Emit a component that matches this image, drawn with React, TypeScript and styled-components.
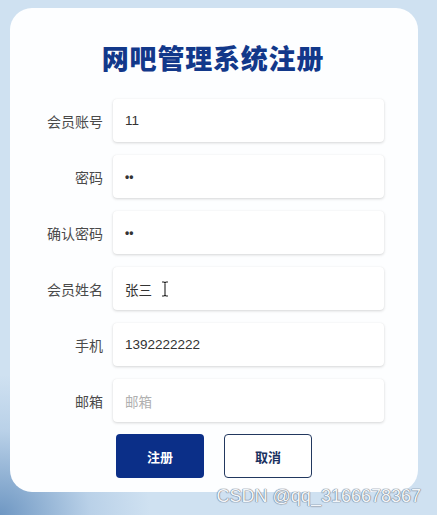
import React from "react";
import styled, { createGlobalStyle } from "styled-components";

const Global = createGlobalStyle`
  html, body { margin: 0; padding: 0; }
  body {
    font-family: "Liberation Sans", "Noto Sans CJK SC", sans-serif;
    overflow: hidden;
  }
`;

const Page = styled.div`
  position: relative;
  width: 437px;
  height: 515px;
  box-sizing: border-box;
  padding: 8px 19px 23px 10px;
  background:
    radial-gradient(ellipse 150px 140px at 0% 100%, rgba(70, 120, 175, 0.7), rgba(120, 160, 205, 0.25) 60%, rgba(205, 224, 240, 0) 100%),
    #cfe1f1;
`;

const Card = styled.div`
  height: 484px;
  box-sizing: border-box;
  background: #fdfeff;
  border-radius: 22px;
  padding-top: 33px;
  display: flex;
  flex-direction: column;
`;

const Title = styled.h1`
  margin: 0 0 24px;
  text-align: center;
  font-family: "Noto Sans CJK SC", sans-serif;
  font-weight: 900;
  font-size: 27px;
  line-height: 34px;
  letter-spacing: 0.8px;
  color: #12388a;
  padding-right: 2px;
`;

const Form = styled.div`
  display: grid;
  grid-template-columns: 93px 271px;
  column-gap: 10px;
  row-gap: 13px;
  align-items: center;
`;

const Label = styled.label`
  text-align: right;
  font-family: "Noto Sans CJK SC", sans-serif;
  font-size: 14px;
  color: #4a4a4a;
`;

const Field = styled.div<{ $placeholder?: boolean }>`
  position: relative;
  height: 43px;
  box-sizing: border-box;
  background: #fff;
  border-radius: 4px;
  box-shadow: 0 1px 3px rgba(0, 0, 0, 0.16), 0 0 1px rgba(0, 0, 0, 0.06);
  display: flex;
  align-items: center;
  padding-left: 12px;
  font-family: "Liberation Sans", "Noto Sans CJK SC", sans-serif;
  font-size: 13.5px;
  color: ${(p) => (p.$placeholder ? "#b0b0b0" : "#333")};
`;

const Dots = styled.span`
  font-size: 12px;
  font-weight: 700;
  color: #333;
`;

const Cursor = styled.svg`
  position: absolute;
  left: 48px;
  top: 14px;
`;

const Buttons = styled.div`
  display: flex;
  gap: 20px;
  margin: 12px 0 0 106px;
`;

const Button = styled.button<{ $primary?: boolean }>`
  width: 88px;
  height: 44px;
  box-sizing: border-box;
  border-radius: 4px;
  font-family: "Noto Sans CJK SC", sans-serif;
  font-size: 13px;
  font-weight: 700;
  cursor: pointer;
  background: ${(p) => (p.$primary ? "#0b2f88" : "#fff")};
  color: ${(p) => (p.$primary ? "#fff" : "#1b3160")};
  border: ${(p) => (p.$primary ? "none" : "1.5px solid #22385f")};
`;

const Watermark = styled.div`
  position: absolute;
  right: 16px;
  bottom: 8px;
  font-family: "Liberation Sans", sans-serif;
  font-size: 18px;
  color: #f2f5f9;
  text-shadow: 0 0 1px #6f7c8c, 0 0 1px #6f7c8c, 0 0 1px #6f7c8c;
`;

const rows: { label: string; value: React.ReactNode; placeholder?: boolean; cursor?: boolean }[] = [
  { label: "会员账号", value: "11" },
  { label: "密码", value: <Dots>••</Dots> },
  { label: "确认密码", value: <Dots>••</Dots> },
  { label: "会员姓名", value: "张三", cursor: true },
  { label: "手机", value: "1392222222" },
  { label: "邮箱", value: "邮箱", placeholder: true },
];

export default function App() {
  return (
    <>
      <Global />
      <Page>
        <Card>
          <Title>网吧管理系统注册</Title>
          <Form>
            {rows.map((r) => (
              <React.Fragment key={r.label}>
                <Label>{r.label}</Label>
                <Field $placeholder={r.placeholder}>
                  {r.value}
                  {r.cursor && (
                    <Cursor width="8" height="16" viewBox="0 0 8 16">
                      <path d="M1 1h2l1 1 1-1h2M4 2v12M1 15h2l1-1 1 1h2" fill="none" stroke="#222" strokeWidth="1.1" />
                    </Cursor>
                  )}
                </Field>
              </React.Fragment>
            ))}
          </Form>
          <Buttons>
            <Button $primary>注册</Button>
            <Button>取消</Button>
          </Buttons>
        </Card>
        <Watermark>CSDN @qq_3166678367</Watermark>
      </Page>
    </>
  );
}
